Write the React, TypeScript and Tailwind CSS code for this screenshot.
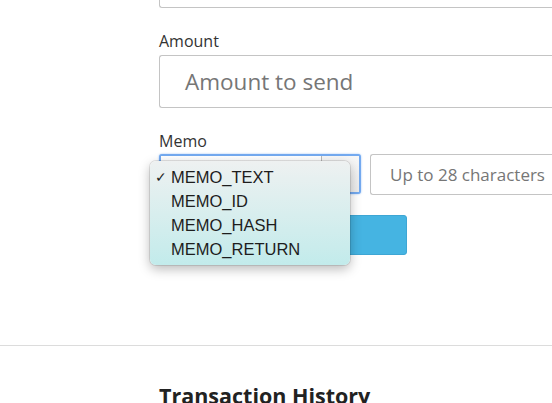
import React from 'react';

const memoTypes = ['MEMO_TEXT', 'MEMO_ID', 'MEMO_HASH', 'MEMO_RETURN'];

const MemoMenu: React.FC = () => (
  <div
    className="absolute left-[-9px] top-[7px] w-[200px] rounded-[6px] bg-gradient-to-b from-[#eef1f1] to-[#c2ebeb] py-[4px] shadow-[0_4px_12px_rgba(0,0,0,0.28)] ring-1 ring-black/10"
    style={{ fontFamily: '"Liberation Sans", Arial, sans-serif' }}
  >
    {memoTypes.map((t, i) => (
      <div key={t} className="relative flex h-[24px] items-center pl-[21px] text-[16.5px] text-[#1d1d1d]">
        {i === 0 && <span className="absolute left-[5px] text-[14px]">✓</span>}
        {t}
      </div>
    ))}
  </div>
);

export default function App() {
  return (
    <div
      className="h-[403px] w-full overflow-hidden bg-white"
      style={{ fontFamily: '"Open Sans", sans-serif' }}
    >
      <div className="pl-[159px]">
        {/* previous field, mostly scrolled off */}
        <div className="mt-[-45px] h-[53px] w-[500px] shrink-0 rounded-l-[3px] border border-r-0 border-[#c4c4c4]" />

        <label className="mt-[21px] mb-[2px] block text-[16px] leading-[24px] text-[#333]">Amount</label>
        <div className="flex h-[53px] w-[500px] shrink-0 items-center rounded-l-[3px] border border-r-0 border-[#c4c4c4] pl-[25px] text-[22.5px] text-[#767676]">
          Amount to send
        </div>

        <label className="mt-[21px] mb-[1px] block text-[16px] leading-[24px] text-[#333]">Memo</label>
        <div className="flex w-[600px] items-start gap-[9px]">
          <div className="relative h-[40px] w-[202px] shrink-0">
            <div className="flex h-full w-full rounded-[3px] border-2 border-[#74aaf0] bg-white shadow-[0_0_2px_rgba(80,150,240,0.6)]">
              <div className="flex-1 bg-gradient-to-b from-white to-[#f4f4f4]" />
              <div className="w-[38px] border-l border-[#b9b9b9] bg-gradient-to-b from-[#f7f7f7] to-[#ececec]" />
            </div>
            <MemoMenu />
          </div>
          <div className="flex h-[41px] w-[300px] shrink-0 items-center rounded-l-[3px] border border-r-0 border-[#c4c4c4] pl-[19px] text-[17px] text-[#767676]">
            Up to 28 characters
          </div>
        </div>

        <button className="mt-[20px] block h-[40px] w-[248px] rounded-[3px] border border-[#3ea6d4] bg-[#45b4e2]" />
      </div>

      <div className="mt-[90px] border-t border-[#dcdcdc]" />

      <div className="pl-[159px]">
        <h2 className="mt-[36px] whitespace-nowrap text-[21.5px] font-bold leading-[28px] text-[#222]">Transaction History</h2>
      </div>
    </div>
  );
}
